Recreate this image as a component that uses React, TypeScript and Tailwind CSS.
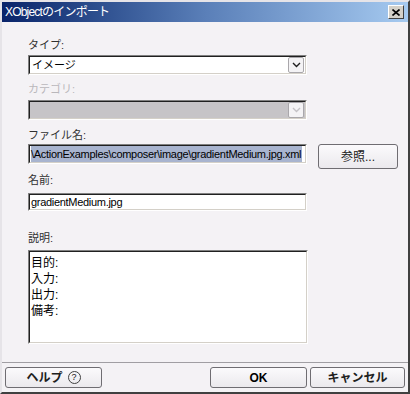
import React from "react";

const font = { fontFamily: '"Liberation Sans", "Noto Sans CJK JP", sans-serif' };

function Sunken({
  className = "",
  inner = "",
  children,
}: {
  className?: string;
  inner?: string;
  children?: React.ReactNode;
}) {
  return (
    <div
      className={`overflow-hidden border border-t-[#808080] border-l-[#808080] border-b-[#ffffff] border-r-[#ffffff] ${className}`}
    >
      <div
        className={`h-full overflow-hidden border border-t-[#202020] border-l-[#202020] border-b-[#d4d0c8] border-r-[#d4d0c8] ${inner}`}
      >
        {children}
      </div>
    </div>
  );
}

function Chevron({ color }: { color: string }) {
  return (
    <svg width="9" height="6" viewBox="0 0 9 6">
      <path d="M1 1 L4.5 4.5 L8 1" fill="none" stroke={color} strokeWidth="1.4" />
    </svg>
  );
}

function Select({ value, disabled }: { value?: string; disabled?: boolean }) {
  return (
    <Sunken
      className="h-[20px] w-[279px]"
      inner={`flex items-center ${disabled ? "bg-[#c6c4c7]" : "bg-white"}`}
    >
      <span className="flex-1 pl-[2px] text-[11px] leading-none text-black">{value}</span>
      <div className="mr-[1px] flex h-[16px] w-[16px] items-center justify-center rounded-[2px] border border-[#a9a7ab] bg-[#f4f3f5]">
        <Chevron color={disabled ? "#c4c2c6" : "#202020"} />
      </div>
    </Sunken>
  );
}

function Label({ children, disabled }: { children: React.ReactNode; disabled?: boolean }) {
  return (
    <div
      className={`h-[14px] text-[11px] leading-[14px] ${disabled ? "text-[#b9b7bb]" : "text-[#303030]"}`}
    >
      {children}
    </div>
  );
}

function Btn({
  children,
  className = "",
}: {
  children: React.ReactNode;
  className?: string;
}) {
  return (
    <div
      className={`flex items-center justify-center rounded-[3px] border border-[#6f6d72] bg-gradient-to-b from-[#fbfafc] to-[#ebe9ed] text-[12px] ${className}`}
    >
      {children}
    </div>
  );
}

export default function App() {
  return (
    <div
      style={font}
      className="flex h-[394px] w-[410px] flex-col border-2 border-t-[#e6e4e8] border-l-[#e6e4e8] border-b-[#404040] border-r-[#404040] bg-[#f4f2f5]"
    >
      <div className="flex h-[20px] shrink-0 items-center justify-between bg-gradient-to-r from-[#0a246a] via-[#5a7fb8] to-[#a6caf0] pl-[3px] pr-[4px]">
        <span className="text-[12px] leading-none tracking-[-0.8px] text-white">XObjectのインポート</span>
        <div className="flex h-[14px] w-[16px] items-center justify-center border border-t-white border-l-white border-b-[#404040] border-r-[#404040] bg-[#d4d0c8]">
          <svg width="8" height="7" viewBox="0 0 8 7">
            <path d="M0.5 0.5 L7.5 6.5 M7.5 0.5 L0.5 6.5" stroke="#000" strokeWidth="1.6" />
          </svg>
        </div>
      </div>

      <div className="flex flex-1 flex-col pl-[26px] pt-[16px]">
        <Label>タイプ:</Label>
        <div className="mt-[3px]">
          <Select value="イメージ" />
        </div>

        <div className="mt-[7px]">
          <Label disabled>カテゴリ:</Label>
        </div>
        <div className="mt-[4px]">
          <Select disabled />
        </div>

        <div className="mt-[8px]">
          <Label>ファイル名:</Label>
        </div>
        <div className="mt-[2px] flex items-start">
          <Sunken className="h-[20px] w-[279px]" inner="flex items-center bg-white">
            <span className="ml-[1px] whitespace-nowrap bg-[#a8b4cf] pr-[1px] text-[11px] leading-[16px] tracking-[-0.3px] text-black">
              \ActionExamples\composer\image\gradientMedium.jpg.xml
            </span>
          </Sunken>
          <Btn className="ml-[11px] h-[25px] w-[80px] text-[11px] text-[#202020]">参照...</Btn>
        </div>

        <div className="mt-[4px]">
          <Label>名前:</Label>
        </div>
        <div className="mt-[6px]">
          <Sunken className="h-[18px] w-[279px]" inner="flex items-center bg-white">
            <span className="pl-[1px] text-[11px] leading-none tracking-[-0.3px] text-black">
              gradientMedium.jpg
            </span>
          </Sunken>
        </div>

        <div className="mt-[20px]">
          <Label>説明:</Label>
        </div>
        <div className="mt-[5px]">
          <Sunken className="h-[94px] w-[280px]" inner="bg-white pl-[1px] pt-[3px]">
            <div className="text-[12px] leading-[16px] text-black">
              <div>目的:</div>
              <div>入力:</div>
              <div>出力:</div>
              <div>備考:</div>
            </div>
          </Sunken>
        </div>
      </div>

      <div className="flex shrink-0 items-center justify-between border-t border-t-[#a09ea3] px-[3px] pb-[4px] pt-[4px]">
        <Btn className="h-[21px] w-[97px] font-bold text-[#202020]">
          <span>ヘルプ</span>
          <span className="ml-[5px] flex h-[13px] w-[13px] items-center justify-center rounded-full border border-[#404040] text-[9px] font-normal leading-none">
            ?
          </span>
        </Btn>
        <div className="flex gap-[3px]">
          <Btn className="h-[21px] w-[97px] font-bold text-black">OK</Btn>
          <Btn className="h-[21px] w-[95px] font-bold text-[#202020]">キャンセル</Btn>
        </div>
      </div>
    </div>
  );
}
